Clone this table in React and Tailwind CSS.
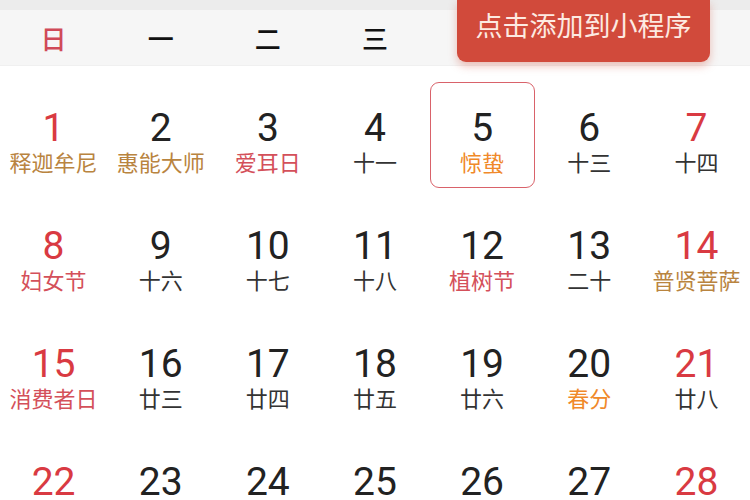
import React from 'react';

const WEEK = ['日', '一', '二', '三', '', '', ''];

// tone: red | gold | orange | plain
const DAYS = [
  { d: 1, sub: '释迦牟尼', red: true, tone: 'gold' },
  { d: 2, sub: '惠能大师', tone: 'gold' },
  { d: 3, sub: '爱耳日', tone: 'red' },
  { d: 4, sub: '十一' },
  { d: 5, sub: '惊蛰', tone: 'orange', selected: true },
  { d: 6, sub: '十三' },
  { d: 7, sub: '十四', red: true },
  { d: 8, sub: '妇女节', red: true, tone: 'red' },
  { d: 9, sub: '十六' },
  { d: 10, sub: '十七' },
  { d: 11, sub: '十八' },
  { d: 12, sub: '植树节', tone: 'red' },
  { d: 13, sub: '二十' },
  { d: 14, sub: '普贤菩萨', red: true, tone: 'gold' },
  { d: 15, sub: '消费者日', red: true, tone: 'red' },
  { d: 16, sub: '廿三' },
  { d: 17, sub: '廿四' },
  { d: 18, sub: '廿五' },
  { d: 19, sub: '廿六' },
  { d: 20, sub: '春分', tone: 'orange' },
  { d: 21, sub: '廿八', red: true },
  { d: 22, sub: '廿九', red: true },
  { d: 23, sub: '三十' },
  { d: 24, sub: '三月' },
  { d: 25, sub: '初二' },
  { d: 26, sub: '初三' },
  { d: 27, sub: '初四' },
  { d: 28, sub: '初五', red: true },
];

const toneClass = {
  gold: 'text-[#b9843f]',
  red: 'text-[#d4505a]',
  orange: 'text-[#f0892a]',
  plain: 'text-[#333333]',
};

function DayCell({ day }) {
  return (
    <div className="h-[118px] flex justify-center">
      <div
        className={
          'mt-[16px] w-[105px] h-[106px] shrink-0 rounded-[9px] border-[1.5px] flex flex-col items-center pt-[25px] ' +
          (day.selected ? 'border-[#d9626a]' : 'border-transparent')
        }
      >
        <span
          className={
            'font-["Roboto",sans-serif] text-[39px] leading-[40px] ' +
            (day.red ? 'text-[#d93a42]' : 'text-[#222222]')
          }
        >
          {day.d}
        </span>
        <span className={'text-[22px] leading-[26px] ' + toneClass[day.tone || 'plain']}>
          {day.sub}
        </span>
      </div>
    </div>
  );
}

export default function App() {
  return (
    <div className='w-[750px] h-[500px] overflow-hidden bg-white font-["Noto_Sans_CJK_SC","Noto_Sans",sans-serif]'>
      <div className="relative">
        <div className="h-[10px] bg-[#ececec]" />
        <div className="h-[56px] bg-[#f6f6f6] grid grid-cols-7 items-center border-b border-[#f0f0f0]">
          {WEEK.map((w, i) => (
            <div
              key={i}
              className={'text-center text-[26px] leading-[30px] font-medium ' + (i === 0 ? 'text-[#d04a58]' : 'text-[#111111]')}
            >
              {w}
            </div>
          ))}
        </div>
        <div className="absolute left-[457px] top-0 w-[253px] h-[62px] rounded-b-[9px] bg-[#d14a3b] shadow-[0_4px_8px_rgba(210,80,60,0.35)] flex items-center justify-center pb-[12px]">
          <span className="text-[27px] leading-[32px] text-[#fdeae2]">点击添加到小程序</span>
        </div>
      </div>
      <div className="grid grid-cols-7">
        {DAYS.map((day) => (
          <DayCell key={day.d} day={day} />
        ))}
      </div>
    </div>
  );
}
